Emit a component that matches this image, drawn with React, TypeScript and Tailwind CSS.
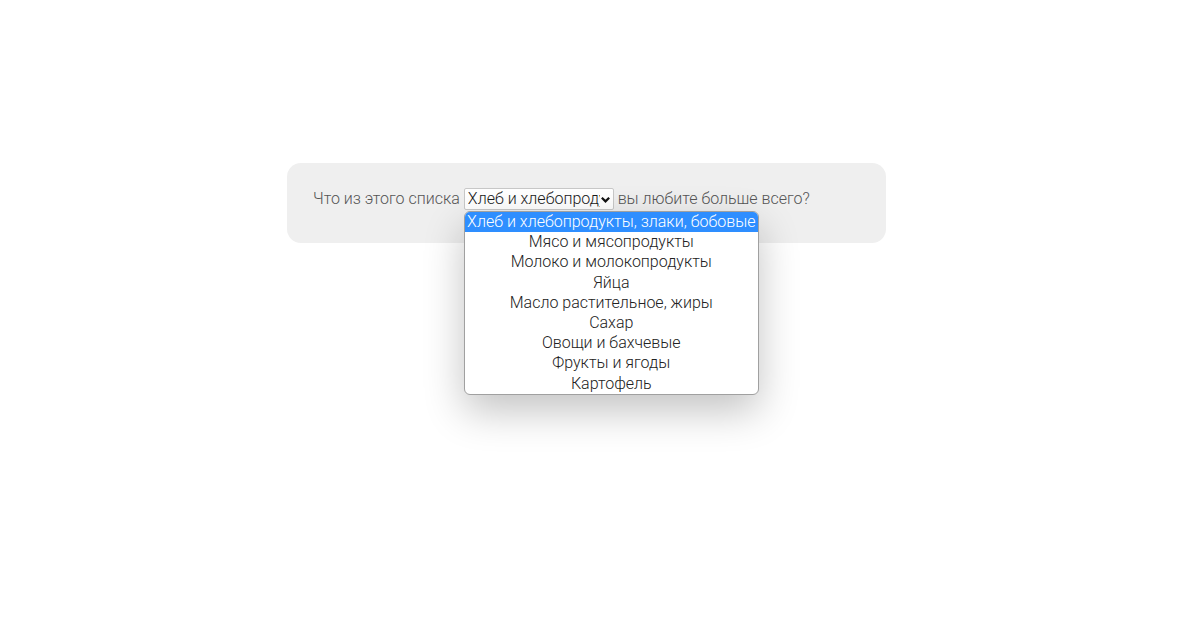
import { useState } from "react";

const foods = [
  "Хлеб и хлебопродукты, злаки, бобовые",
  "Мясо и мясопродукты",
  "Молоко и молокопродукты",
  "Яйца",
  "Масло растительное, жиры",
  "Сахар",
  "Овощи и бахчевые",
  "Фрукты и ягоды",
  "Картофель",
];

function App() {
  const [selected] = useState(0);

  return (
    <div className="min-h-[630px] w-full bg-white font-['Roboto',sans-serif]">
      <div className="pt-[163px] pl-[287px]">
        <div className="w-[599px] h-[80px] rounded-[14px] bg-[#efefef] pt-[25px] pl-[26px] text-[16px] leading-[22px] text-[#555] font-light">
          <span className="inline-block align-top">Что из этого списка</span>{" "}
          <span className="relative inline-block align-top">
            <span className="flex items-center w-[150px] h-[22px] bg-white border border-[#c8c8c8] rounded-[2px] pl-[3px] pr-[2px] text-[#1a1a1a]">
              <span className="flex-1 overflow-hidden whitespace-nowrap">{foods[selected]}</span>
              <svg width="11" height="11" viewBox="0 0 12 12" className="shrink-0">
                <path d="M2 4 L6 8 L10 4" fill="none" stroke="#111" strokeWidth="2.4" />
              </svg>
            </span>
            <ul className="absolute left-0 top-[23px] z-10 w-[295px] overflow-hidden rounded-[6px] border border-[#a0a0a0] bg-white shadow-[0_16px_40px_rgba(0,0,0,0.24)] text-[#222]">
              {foods.map((food, i) => (
                <li
                  key={food}
                  className={
                    i === selected
                      ? "h-[20.2px] leading-[20.2px] text-center whitespace-nowrap bg-[#2e8eff] text-white"
                      : "h-[20.2px] leading-[20.2px] text-center whitespace-nowrap"
                  }
                >
                  {food}
                </li>
              ))}
            </ul>
          </span>{" "}
          <span className="inline-block align-top">вы любите больше всего?</span>
        </div>
      </div>
    </div>
  );
}

export default App;
